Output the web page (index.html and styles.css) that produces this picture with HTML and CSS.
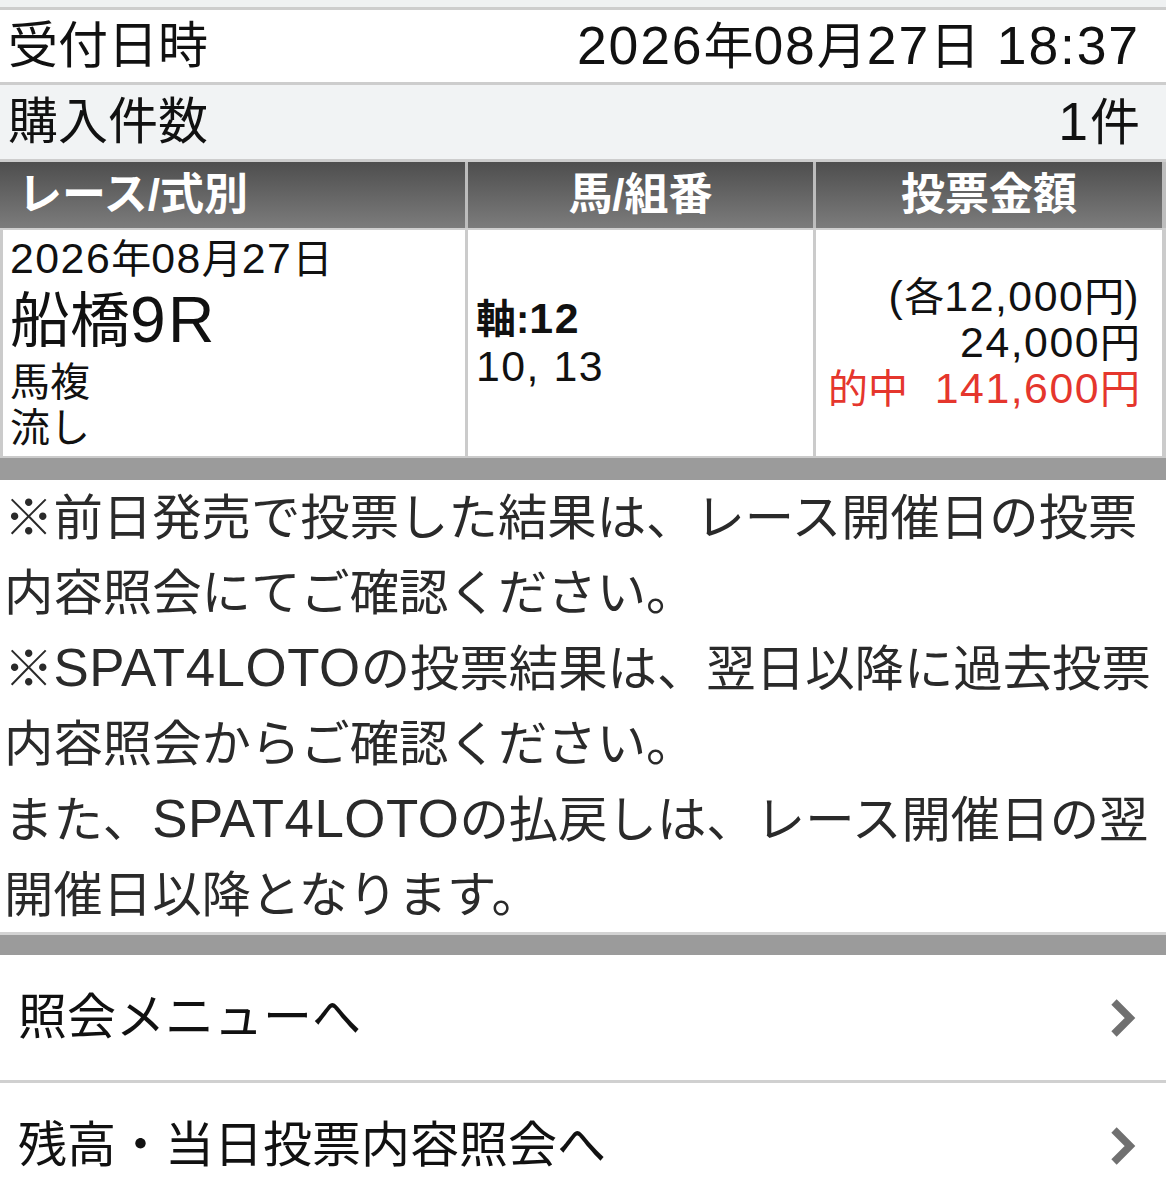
FILE: index.html
```html
<!DOCTYPE html>
<html lang="ja">
<head>
<meta charset="utf-8">
<title>投票内容照会</title>
<link rel="stylesheet" href="styles.css">
</head>
<body>
<div class="page">
  <div class="topstrip"></div>

  <div class="info-row info-row--white">
    <span class="info-label">受付日時</span>
    <span class="info-value"><span class="n">2026</span>年<span class="n">08</span>月<span class="n">27</span>日<span class="n"> 18:37</span></span>
  </div>
  <div class="info-row info-row--tint">
    <span class="info-label">購入件数</span>
    <span class="info-value"><span class="n">1</span>件</span>
  </div>

  <div class="bet-table">
    <div class="bet-head">
      <div class="th th--left">レース/式別</div>
      <div class="th">馬/組番</div>
      <div class="th">投票金額</div>
    </div>
    <div class="bet-body">
      <div class="td td-race">
        <div class="race-date"><span class="n">2026</span>年<span class="n">08</span>月<span class="n">27</span>日</div>
        <div class="race-name">船橋<span class="n">9R</span></div>
        <div class="race-type">馬複</div>
        <div class="race-type">流し</div>
      </div>
      <div class="td td-horse">
        <div class="axis">軸:<span class="n">12</span></div>
        <div><span class="n">10, 13</span></div>
      </div>
      <div class="td td-amount">
        <div><span class="n">(</span>各<span class="n">12,000</span>円<span class="n">)</span></div>
        <div><span class="n">24,000</span>円</div>
        <div class="hit">的中<span class="n">&nbsp;&nbsp;141,600</span>円</div>
      </div>
    </div>
  </div>

  <div class="bar"></div>

  <div class="notes">
    ※前日発売で投票した結果は、レース開催日の投票<br>
    内容照会にてご確認ください。<br>
    ※<span class="l">SPAT4LOTO</span>の投票結果は、翌日以降に過去投票<br>
    内容照会からご確認ください。<br>
    また、<span class="l">SPAT4LOTO</span>の払戻しは、レース開催日の翌<br>
    開催日以降となります。
  </div>

  <div class="bar bar--bottom"></div>

  <nav class="menu">
    <a class="menu-item" href="#">
      <span>照会メニューへ</span>
      <svg class="chev" viewBox="0 0 26 40" width="26" height="40" aria-hidden="true"><polyline points="4,4 20,20 4,36" fill="none" stroke="#707070" stroke-width="7.5" stroke-linejoin="miter" stroke-linecap="butt"/></svg>
    </a>
    <a class="menu-item" href="#">
      <span>残高・当日投票内容照会へ</span>
      <svg class="chev" viewBox="0 0 26 40" width="26" height="40" aria-hidden="true"><polyline points="4,4 20,20 4,36" fill="none" stroke="#707070" stroke-width="7.5" stroke-linejoin="miter" stroke-linecap="butt"/></svg>
    </a>
  </nav>
</div>
</body>
</html>
```

FILE: styles.css
```css
* {
  box-sizing: border-box;
}

html,
body {
  margin: 0;
  padding: 0;
  background: #fff;
}

body {
  width: 1166px;
  color: #111;
  font-family: "Liberation Sans", "Noto Sans CJK JP", sans-serif;
}

.n {
  font-size: 1.07em;
  letter-spacing: 0.035em;
}

.l {
  font-size: 1.07em;
  letter-spacing: 0.01em;
}

.topstrip {
  height: 10px;
  background: #eff1f2;
  border-bottom: 3px solid #cdcdcd;
}

.info-row {
  display: flex;
  justify-content: space-between;
  align-items: center;
  padding: 0 26px 0 8px;
  font-size: 50px;
  line-height: 1;
  border-bottom: 3px solid #cdcdcd;
}

.info-row--white {
  height: 75px;
  background: #fff;
}

.info-row--tint {
  height: 77px;
  background: #f1f3f4;
}

.bet-head {
  display: grid;
  grid-template-columns: 465px 345px 346px;
  column-gap: 3px;
  padding: 0 4px 0 0;
  background: #bdbdbd;
  border-bottom: 2px solid #cfcfcf;
}

.th {
  height: 66px;
  display: flex;
  align-items: center;
  justify-content: center;
  color: #fff;
  font-weight: 700;
  font-size: 44px;
  line-height: 1;
  background: linear-gradient(#4e4e4e, #7c7c7c);
}

.th--left {
  justify-content: flex-start;
  padding-left: 18px;
}

.bet-body {
  display: grid;
  grid-template-columns: 462px 345px 346px;
  column-gap: 3px;
  padding: 0 4px 2px 3px;
  background: #cbcbcb;
}

.td {
  height: 226px;
  background: #fff;
  font-size: 40px;
}

.td-race {
  padding: 4px 0 0 7px;
}

.race-date {
  line-height: 48px;
}

.race-name {
  font-size: 60px;
  line-height: 74px;
}

.race-type {
  line-height: 46px;
}

.td-horse {
  display: flex;
  flex-direction: column;
  justify-content: center;
  padding-left: 8px;
  line-height: 47px;
}

.axis {
  font-weight: 700;
}

.td-amount {
  display: flex;
  flex-direction: column;
  justify-content: center;
  align-items: flex-end;
  padding-right: 22px;
  line-height: 45px;
  white-space: nowrap;
}

.hit {
  color: #e5362d;
}

.bar {
  height: 22px;
  background: #9b9b9b;
}

.bar--bottom {
  height: 23px;
  border-top: 3px solid #d3d3d3;
}

.notes {
  padding: 0 0 0 4px;
  font-size: 49.4px;
  line-height: 75px;
  color: #2a2a2a;
  white-space: nowrap;
}

.menu {
  display: flex;
  flex-direction: column;
}

.menu-item {
  display: flex;
  justify-content: space-between;
  align-items: center;
  height: 128px;
  padding: 0 30px 0 18px;
  font-size: 49px;
  line-height: 1;
  color: #111;
  text-decoration: none;
  border-bottom: 3px solid #d0d0d0;
}

.chev {
  display: block;
}
```
